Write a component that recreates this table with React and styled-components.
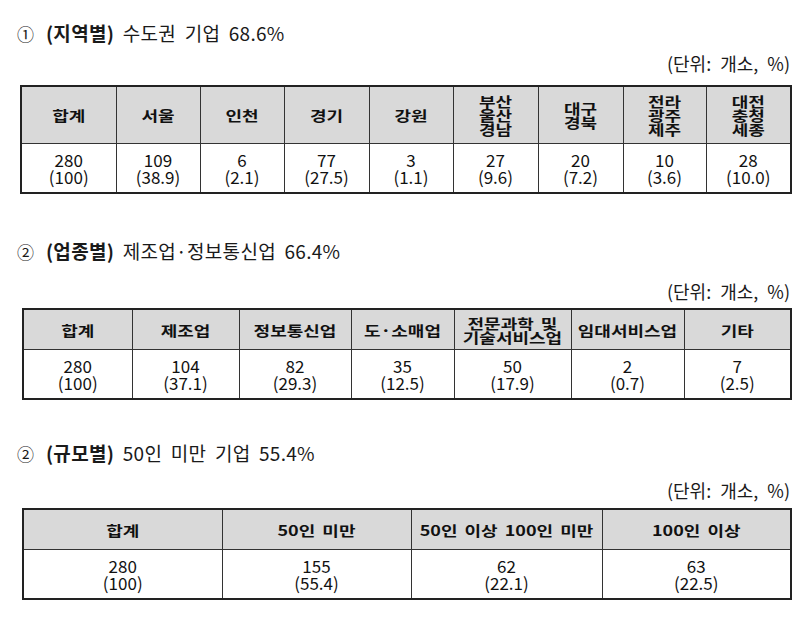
import React from 'react';
import styled, { createGlobalStyle } from 'styled-components';

const GlobalStyle = createGlobalStyle`
    body {
        margin: 0;
        background: #fff;
        color: #1a1a1a;
        font-family: "Noto Sans CJK KR", "Noto Sans", sans-serif;
    }
`;

const Page = styled.div`
    width: 811px;
    padding: 23px 21px 0 17px;
    box-sizing: border-box;
`;

const Section = styled.section`
    margin-top: ${p => p.$top || 0}px;
`;

const Title = styled.h2`
    margin: 0;
    font-size: 19px;
    font-weight: 400;
    line-height: 20px;
    letter-spacing: 0.3px;
    word-spacing: 4px;
    color: #1a1a1a;

    b {
        font-weight: 700;
    }
`;

const Mark = styled.span`
    font-size: 17px;
    margin-right: 3px;
`;

const Unit = styled.div`
    margin-top: ${p => p.$top}px;
    text-align: right;
    font-size: 18px;
    line-height: 20px;
    word-spacing: 5px;
`;

const Table = styled.table`
    margin-top: ${p => p.$top}px;
    margin-left: ${p => p.$left}px;
    width: calc(100% - ${p => p.$left}px);
    border-collapse: collapse;
    table-layout: fixed;
    border: 2px solid #222;
`;

const Th = styled.th`
    height: ${p => p.$h}px;
    padding: 0;
    background: #d9d9d9;
    border: 1px solid #333;
    font-size: 18px;
    font-weight: 700;
    line-height: 18px;
    word-spacing: 3px;
    color: #111;
    white-space: pre-line;
    overflow: hidden;
`;

const Label = styled.span`
    display: inline-block;
    transform: scaleY(0.78);
`;

const Td = styled.td`
    height: 48px;
    padding: 0;
    border: 1px solid #333;
    text-align: center;
    font-size: 17px;
    line-height: 17px;
    color: #111;
`;

const regions = [
    ['합계', '280', '100'],
    ['서울', '109', '38.9'],
    ['인천', '6', '2.1'],
    ['경기', '77', '27.5'],
    ['강원', '3', '1.1'],
    ['부산\n울산\n경남', '27', '9.6'],
    ['대구\n경북', '20', '7.2'],
    ['전라\n광주\n제주', '10', '3.6'],
    ['대전\n충청\n세종', '28', '10.0'],
];

const industries = [
    ['합계', '280', '100'],
    ['제조업', '104', '37.1'],
    ['정보통신업', '82', '29.3'],
    ['도·소매업', '35', '12.5'],
    ['전문과학 및\n기술서비스업', '50', '17.9'],
    ['임대서비스업', '2', '0.7'],
    ['기타', '7', '2.5'],
];

const sizes = [
    ['합계', '280', '100'],
    ['50인 미만', '155', '55.4'],
    ['50인 이상 100인 미만', '62', '22.1'],
    ['100인 이상', '63', '22.5'],
];

const DataTable = ({ rows, widths, headH, top, left }) => (
    <Table $top={top} $left={left}>
        <colgroup>
            {widths.map((w, i) => <col key={i} style={{ width: w }} />)}
        </colgroup>
        <thead>
            <tr>
                {rows.map(r => (
                    <Th key={r[0]} $h={headH}><Label>{r[0]}</Label></Th>
                ))}
            </tr>
        </thead>
        <tbody>
            <tr>
                {rows.map(r => (
                    <Td key={r[0]}>{r[1]}<br />({r[2]})</Td>
                ))}
            </tr>
        </tbody>
    </Table>
);

const App = () => (
    <Page>
        <GlobalStyle />
        <Section>
            <Title><Mark>①</Mark> <b>(지역별)</b> 수도권 기업 68.6%</Title>
            <Unit $top={9}>(단위: 개소, %)</Unit>
            <DataTable
                rows={regions}
                widths={[95, 84, 84, 85, 84, 85, 85, 83, 85]}
                headH={56}
                top={12}
                left={3}
            />
        </Section>
        <Section $top={47}>
            <Title><Mark>②</Mark> <b>(업종별)</b> 제조업·정보통신업 66.4%</Title>
            <Unit $top={19}>(단위: 개소, %)</Unit>
            <DataTable
                rows={industries}
                widths={[109, 107, 112, 103, 117, 113, 107]}
                headH={39}
                top={7}
                left={5}
            />
        </Section>
        <Section $top={43}>
            <Title><Mark>②</Mark> <b>(규모별)</b> 50인 미만 기업 55.4%</Title>
            <Unit $top={16}>(단위: 개소, %)</Unit>
            <DataTable
                rows={sizes}
                widths={[199, 189, 191, 189]}
                headH={39}
                top={8}
                left={5}
            />
        </Section>
    </Page>
);

export default App;
